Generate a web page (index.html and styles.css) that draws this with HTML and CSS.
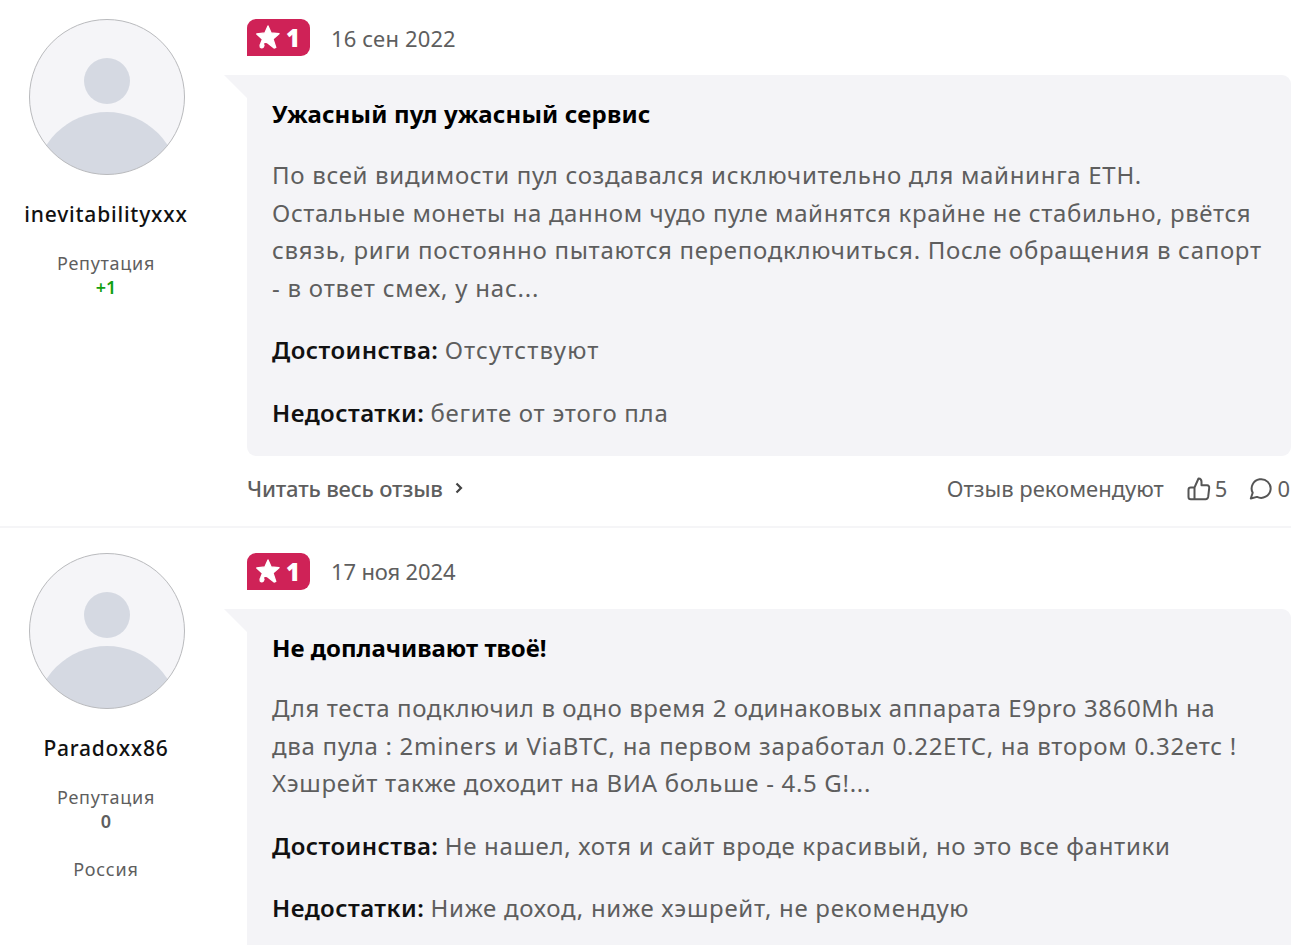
FILE: index.html
```html
<!DOCTYPE html>
<html lang="ru">
<head>
<meta charset="utf-8">
<title>Отзывы</title>
<link rel="stylesheet" href="styles.css">
</head>
<body>
<svg width="0" height="0" class="defs">
  <symbol id="avatar" viewBox="0 0 156 156">
    <clipPath id="round"><circle cx="78" cy="78" r="77.5"/></clipPath>
    <g clip-path="url(#round)">
      <rect width="156" height="156" fill="#f5f5f8"/>
      <circle cx="78" cy="62" r="23" fill="#d5d9e2"/>
      <circle cx="78" cy="165" r="72" fill="#d5d9e2"/>
    </g>
    <circle cx="78" cy="78" r="77.5" fill="none" stroke="#b9babd" stroke-width="1"/>
  </symbol>
  <symbol id="star" viewBox="0 0 24 24">
    <path d="M12 1.8 L14.8 8.200 L22.2 9 L16.600 13.8 L19.2 21.600 L17.6 22.2 L11.400 17.200 Q8.400 16.200 7.600 18.200 Q9 19.600 7.800 21.200 Q6.200 22.600 4.800 21.200 Q4 19.800 5.400 17.800 L6.900 14 L1.600 9.2 L9.200 8.200 Z" fill="#fff" stroke="#fff" stroke-width="1.2" stroke-linejoin="round"/>
  </symbol>
</svg>
<main class="reviews">
  <article class="review">
    <aside class="author">
      <svg class="avatar"><use href="#avatar"/></svg>
      <div class="name n1">inevitabilityxxx</div>
      <div class="rep">Репутация</div>
      <div class="score plus">+1</div>
    </aside>
    <section class="content">
      <header class="head">
        <div class="badge"><svg class="star"><use href="#star"/></svg><span>1</span></div>
        <time class="date d1">16 сен 2022</time>
      </header>
      <div class="bubble">
        <h2 class="title"><span class="t1">Ужасный пул ужасный сервис</span></h2>
        <p class="text">
          <span class="line a1">По всей видимости пул создавался исключительно для майнинга ETH.</span>
          <span class="line a2">Остальные монеты на данном чудо пуле майнятся крайне не стабильно, рвётся</span>
          <span class="line a3">связь, риги постоянно пытаются переподключиться. После обращения в сапорт</span>
          <span class="line a4">- в ответ смех, у нас...</span>
        </p>
        <p class="text"><b>Достоинства:</b> <span class="v1">Отсутствуют</span></p>
        <p class="text"><b>Недостатки:</b> <span class="v2">бегите от этого пла</span></p>
      </div>
      <footer class="foot">
        <a class="more"><span>Читать весь отзыв</span><svg class="chev" viewBox="0 0 8 12"><path d="M1.5 1.5 L6 6 L1.5 10.5" fill="none" stroke="#444" stroke-width="2.2"/></svg></a>
        <div class="actions">
          <span class="recommend">Отзыв рекомендуют</span>
          <svg class="icon like" viewBox="0 0 24 24"><path d="M7.5 10.500 L11.5 1.500 Q14.500 1.700 14.500 4.700 V8.300 H20 Q22.500 8.500 22.200 11.100 L21.200 19.700 Q20.800 22.300 18.600 22.300 H3.800 Q1.500 22.300 1.500 20 V12.800 Q1.500 10.500 3.800 10.500 Z M7.500 10.500 V22.300" fill="none" stroke="#555" stroke-width="2" stroke-linejoin="round"/></svg>
          <span class="count">5</span>
          <svg class="icon comment" viewBox="0 0 24 24"><path d="M1.8 21.500 L3.700 15.800 A9.500 9.300 0 1 1 8 19.900 Z" fill="none" stroke="#555" stroke-width="2" stroke-linejoin="round"/></svg>
          <span class="count">0</span>
        </div>
      </footer>
    </section>
  </article>
  <article class="review second">
    <aside class="author">
      <svg class="avatar"><use href="#avatar"/></svg>
      <div class="name n2">Paradoxx86</div>
      <div class="rep">Репутация</div>
      <div class="score">0</div>
      <div class="country">Россия</div>
    </aside>
    <section class="content">
      <header class="head">
        <div class="badge"><svg class="star"><use href="#star"/></svg><span>1</span></div>
        <time class="date d2">17 ноя 2024</time>
      </header>
      <div class="bubble">
        <h2 class="title"><span class="t2">Не доплачивают твоё!</span></h2>
        <p class="text">
          <span class="line b1">Для теста подключил в одно время 2 одинаковых аппарата E9pro 3860Mh на</span>
          <span class="line b2">два пула : 2miners и ViaBTC, на первом заработал 0.22ETC, на втором 0.32етс !</span>
          <span class="line b3">Хэшрейт также доходит на ВИА больше - 4.5 G!...</span>
        </p>
        <p class="text"><b>Достоинства:</b> <span class="v3">Не нашел, хотя и сайт вроде красивый, но это все фантики</span></p>
        <p class="text"><b>Недостатки:</b> <span class="v4">Ниже доход, ниже хэшрейт, не рекомендую</span></p>
      </div>
    </section>
  </article>
</main>
</body>
</html>
```
FILE: styles.css
```css
* { box-sizing: border-box; }
body {
  margin: 0;
  background: #fff;
  color: #5e5e5e;
  font: 24px/37.5px "Noto Sans", sans-serif;
}
.reviews { height: 945px; overflow: hidden; }
.defs { position: absolute; }
.review {
  display: grid;
  grid-template-columns: 212px 1044px;
  column-gap: 35px;
  height: 528px;
  padding-top: 19px;
  border-bottom: 2px solid #f5f5f7;
}
.review.second { height: 417px; padding-top: 25px; border: 0; }
.author { display: flex; flex-direction: column; align-items: center; text-align: center; white-space: nowrap; }
.avatar { width: 156px; height: 156px; flex: none; margin-left: 1px; }
.name { margin-top: 24px; font-size: 21px; line-height: 30px; font-weight: 500; color: #111; }
.rep { margin-top: 22px; font-size: 18px; line-height: 24px; letter-spacing: 0.7px; }
.score { margin-top: 1px; font-size: 18px; line-height: 23px; font-weight: 600; }
.plus { color: #12a012; }
.country { margin-top: 24px; font-size: 18px; line-height: 24px; letter-spacing: 0.8px; }
.head { display: flex; align-items: center; height: 37px; }
.badge {
  display: flex;
  align-items: center;
  width: 63px;
  height: 37px;
  padding-left: 8px;
  gap: 5px;
  background: #cf2257;
  border-radius: 9px 9px 9px 0;
  color: #fff;
  font-size: 24px;
  font-weight: 900;
}
.star { width: 26px; height: 26px; flex: none; margin-top: -1px; }
.date { margin-left: 21px; font-size: 22px; white-space: nowrap; }
.bubble {
  position: relative;
  height: 381px;
  margin-top: 19px;
  padding: 24px 25px 0;
  background: #f4f4f7;
  border-radius: 0 9px 9px 9px;
}
.second .bubble { height: 336px; border-radius: 0 9px 0 0; }
.bubble::before {
  content: "";
  position: absolute;
  top: 0;
  left: -23px;
  width: 24px;
  height: 24px;
  background: #f4f4f7;
  clip-path: polygon(0 0, 100% 0, 100% 100%);
}
.title { margin: 0; font-size: 24px; line-height: 30px; font-weight: 700; color: #000; white-space: nowrap; }
.text { margin: 25px 0 0; white-space: nowrap; }
.title + .text { margin-top: 27px; }
.second .title + .text { margin-top: 26px; }
.line { display: block; width: max-content; }
.text b { font-weight: 600; color: #111; letter-spacing: 0.45px; }
.foot { display: flex; justify-content: space-between; align-items: center; height: 30px; margin-top: 18px; padding-right: 1px; font-size: 22px; }
.more { display: flex; align-items: center; font-weight: 500; letter-spacing: -0.18px; }
.chev { width: 8px; height: 12px; margin: -3px 0 0 12px; }
.actions { display: flex; align-items: center; }
.icon { width: 24px; height: 24px; margin-top: -1px; }
.like { margin-left: 23px; }
.comment { margin-left: 22px; }
.count { margin-left: 4px; }

/* per-string tracking */
.n1 { letter-spacing: 0.8px; }
.n2 { letter-spacing: 0.75px; }
.d1 { letter-spacing: 0.15px; margin-top: 2px; }
.d2 { letter-spacing: -0.15px; }
.t1 { letter-spacing: 0.17px; }
.a1 { letter-spacing: 0.69px; }
.a2 { letter-spacing: 0.62px; }
.a3 { letter-spacing: 0.69px; }
.a4 { letter-spacing: 0.78px; }
.b1 { letter-spacing: 0.6px; }
.b2 { letter-spacing: 0.73px; }
.b3 { letter-spacing: 0.69px; }
.v1 { letter-spacing: 1.09px; }
.v2 { letter-spacing: 0.72px; }
.v3 { letter-spacing: 0.68px; }
.v4 { letter-spacing: 0.72px; }
```
